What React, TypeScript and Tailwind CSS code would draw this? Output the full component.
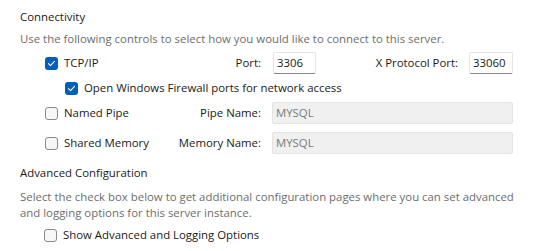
import React from "react";

// Server connectivity settings panel (installer page look)

function Check({ checked }: { checked?: boolean }) {
  if (checked) {
    return (
      <span className="flex h-[13px] w-[13px] shrink-0 items-center justify-center rounded-[3px] bg-[#005fb8]">
        <svg width="9" height="9" viewBox="0 0 9 9" fill="none">
          <path d="M1.5 4.6l2 2 4-4.2" stroke="#fff" strokeWidth="1.1" strokeLinecap="round" strokeLinejoin="round" />
        </svg>
      </span>
    );
  }
  return <span className="block h-[13px] w-[13px] shrink-0 rounded-[3px] border border-[#8a8a8a] bg-[#f7f7f7]" />;
}

function TextBox({ value, width, disabled }: { value: string; width: string; disabled?: boolean }) {
  return (
    <div
      className={`flex h-[22px] items-center rounded-[2px] px-[3px] ${width} ${
        disabled
          ? "border border-[#e3e3e3] bg-[#f0f0f0] text-[#7a7a7a]"
          : "border border-[#e5e5e5] border-b-[#8a8a8a] bg-white text-[#1a1a1a]"
      }`}
    >
      {value}
    </div>
  );
}

export default function App() {
  return (
    <div
      className="h-[251px] w-[543px] bg-white pl-[20px] text-[11.4px] leading-[16px] text-[#1a1a1a]"
      style={{ fontFamily: '"Open Sans", "Noto Sans", sans-serif' }}
    >
      {/* Connectivity */}
      <div className="pt-[9px]">Connectivity</div>
      <div className="mt-[6px] text-[#6d6d6d]">
        Use the following controls to select how you would like to connect to this server.
      </div>

      <div className="pl-[25px]">
        {/* TCP/IP */}
        <div className="mt-[5px] flex h-[22px] items-center">
          <div className="flex w-[115px] items-center gap-[6px]">
            <Check checked />
            <span>TCP/IP</span>
          </div>
          <div className="w-[101px] text-right">Port:</div>
          <div className="ml-[12px]">
            <TextBox value="3306" width="w-[43px]" />
          </div>
          <div className="w-[142px] text-right">X Protocol Port:</div>
          <div className="ml-[11px]">
            <TextBox value="33060" width="w-[44px]" />
          </div>
        </div>

        {/* Firewall */}
        <div className="mt-[3px] flex h-[22px] items-center gap-[6px] pl-[20px]">
          <Check checked />
          <span>Open Windows Firewall ports for network access</span>
        </div>

        {/* Named Pipe */}
        <div className="mt-[3px] flex h-[22px] items-center">
          <div className="flex w-[115px] items-center gap-[6px]">
            <Check />
            <span>Named Pipe</span>
          </div>
          <div className="w-[101px] text-right">Pipe Name:</div>
          <div className="ml-[11px]">
            <TextBox value="MYSQL" width="w-[241px]" disabled />
          </div>
        </div>

        {/* Shared Memory */}
        <div className="mt-[8px] flex h-[22px] items-center">
          <div className="flex w-[115px] items-center gap-[6px]">
            <Check />
            <span>Shared Memory</span>
          </div>
          <div className="w-[101px] text-right">Memory Name:</div>
          <div className="ml-[11px]">
            <TextBox value="MYSQL" width="w-[241px]" disabled />
          </div>
        </div>
      </div>

      {/* Advanced Configuration */}
      <div className="mt-[11px]">Advanced Configuration</div>
      <div className="mt-[8px] pr-[15px] text-[#6d6d6d]">
        Select the check box below to get additional configuration pages where you can set advanced and logging options for this server instance.
      </div>
      <div className="mt-[6px] flex items-center gap-[6px] pl-[24px]">
        <Check />
        <span>Show Advanced and Logging Options</span>
      </div>
    </div>
  );
}
